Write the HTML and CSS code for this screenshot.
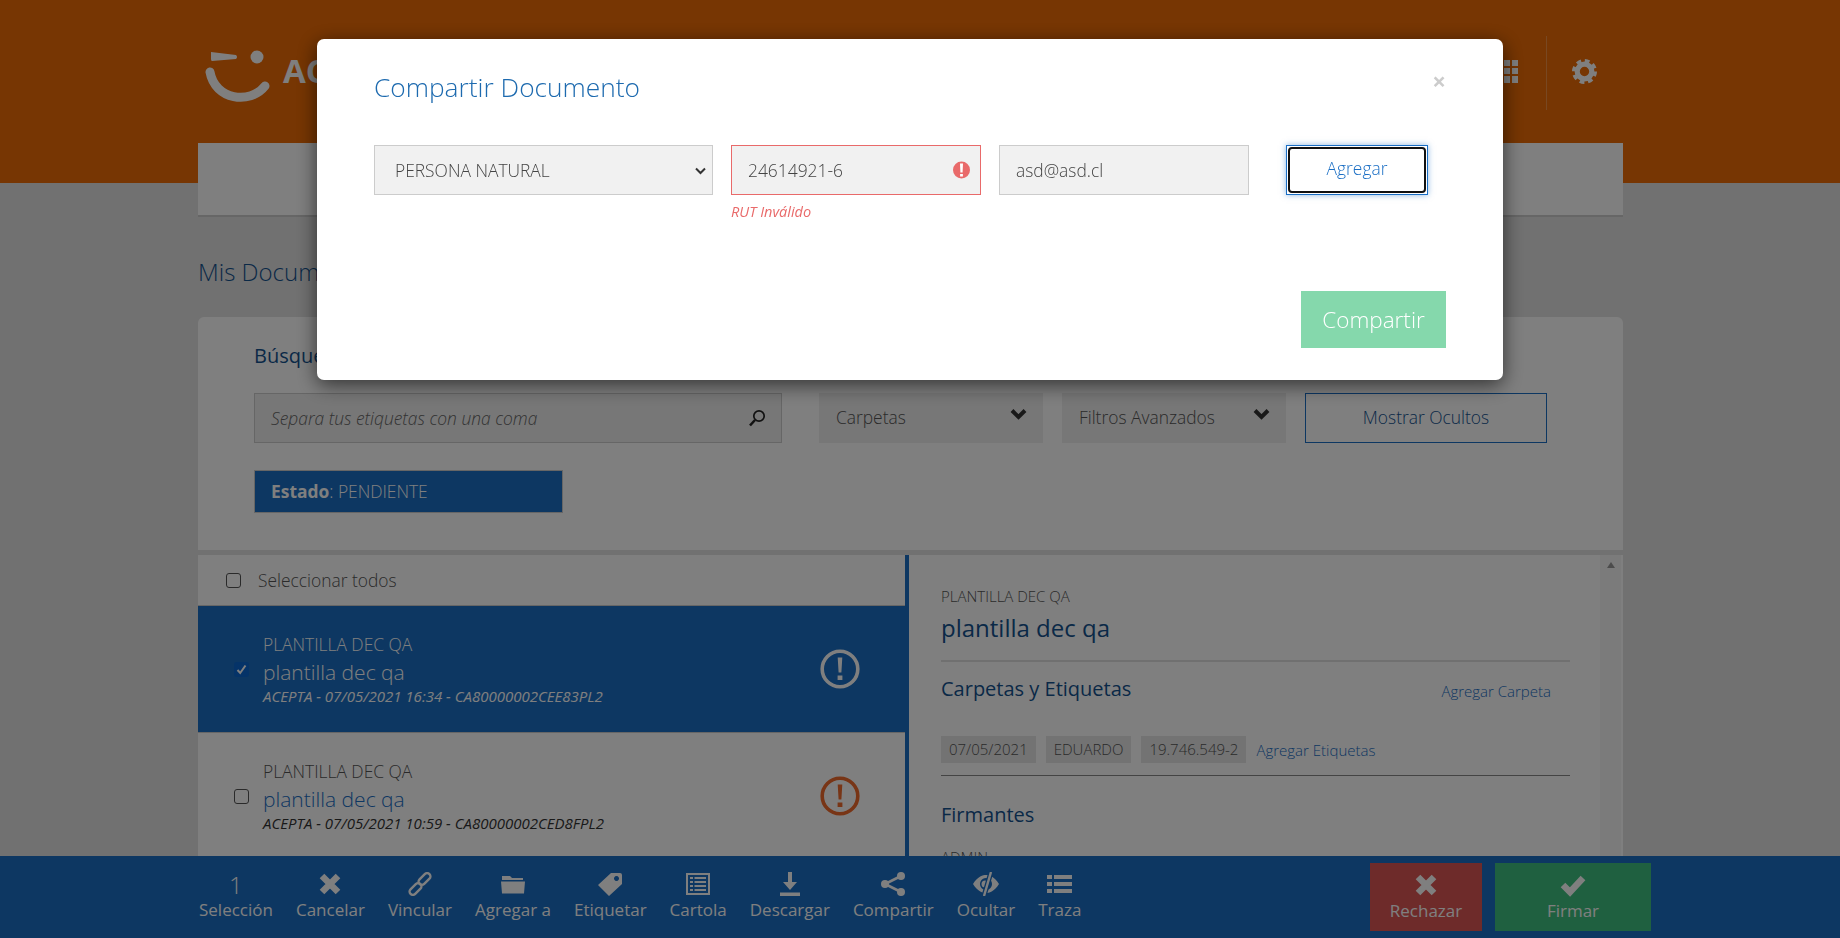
FILE: index.html
```html
<html>
  <head>
  <title>Mis Documentos</title>
<link rel="stylesheet" href="styles.css">
</head>
<body>
  <header class="top">
    <div class="top-inner">
      <div class="logo">
        <svg width="66" height="54" viewBox="0 0 66 54">
          <path d="M6 2 L31 5 Q33 7 31 9 L7 11 Q6 11 6 9 Z" fill="currentColor"/>
          <circle cx="52" cy="7" r="6.5" fill="currentColor"/>
          <path d="M5 22 C10 50 45 55 60 36" fill="none" stroke="currentColor" stroke-width="9" stroke-linecap="round"/>
        </svg>
        <span class="logo-text">ACEPTA</span>
      </div>
      <div class="top-tools">
        <svg class="grid-icon" width="22" height="23" viewBox="0 0 22 23">
          <path d="M0 0h6v6H0zM8 0h6v6H8zM16 0h6v6h-6zM0 8h6v6H0zM8 8h6v6H8zM16 8h6v6h-6zM0 16h6v7H0zM8 16h6v7H8zM16 16h6v7h-6z" fill="currentColor"/>
        </svg>
        <div class="top-sep"></div>
        <svg class="gear-icon" width="25" height="25" viewBox="0 0 24 24">
          <circle cx="12" cy="12" r="7" fill="none" stroke="currentColor" stroke-width="5"/>
          <circle cx="12" cy="12" r="10.4" fill="none" stroke="currentColor" stroke-width="3.2" stroke-dasharray="4.6 3.57"/>
        </svg>
      </div>
    </div>
  </header>

  <div class="wrap">
    <nav class="nav-panel"></nav>
    <h2 class="page-title">Mis Documentos</h2>

    <section class="search-panel">
      <h3 class="search-title">Búsqueda Avanzada</h3>
      <div class="search-row">
        <div class="search-box">
          <span class="placeholder">Separa tus etiquetas con una coma</span>
          <svg width="18" height="18" viewBox="0 0 18 18">
            <circle cx="11" cy="7" r="5.2" fill="none" stroke="currentColor" stroke-width="1.7"/>
            <path d="M7 11 L2 16.5" stroke="currentColor" stroke-width="2.6"/>
          </svg>
        </div>
        <div class="drop">
          <span>Carpetas</span>
          <svg class="chev" width="17" height="12" viewBox="0 0 17 12"><path d="M2 2.5 L8.5 9 L15 2.5" fill="none" stroke="currentColor" stroke-width="4"/></svg>
        </div>
        <div class="drop">
          <span>Filtros Avanzados</span>
          <svg class="chev" width="17" height="12" viewBox="0 0 17 12"><path d="M2 2.5 L8.5 9 L15 2.5" fill="none" stroke="currentColor" stroke-width="4"/></svg>
        </div>
        <div class="show-hidden">Mostrar Ocultos</div>
      </div>
      <div class="state-tag"><b>Estado</b>: PENDIENTE</div>
    </section>

    <section class="results">
      <div class="list">
        <div class="select-all"><span class="check"></span>Seleccionar todos</div>

        <div class="doc active">
          <span class="check on">
            <svg width="11" height="11" viewBox="0 0 11 11"><path d="M1.5 6 L4.2 9 L9.5 1.5" fill="none" stroke="#fff" stroke-width="2"/></svg>
          </span>
          <div class="doc-text">
            <div class="doc-type">PLANTILLA DEC QA</div>
            <div class="doc-name">plantilla dec qa</div>
            <div class="doc-meta">ACEPTA - 07/05/2021 16:34 - CA80000002CEE83PL2</div>
          </div>
          <svg class="warn" width="40" height="40" viewBox="0 0 40 40">
            <circle cx="20" cy="20" r="17.8" fill="none" stroke="currentColor" stroke-width="3.6"/>
            <path d="M17.7 8.5h4.6l-.9 15h-2.8z M17.6 26.5h4.8v4.6h-4.8z" fill="currentColor"/>
          </svg>
        </div>

        <div class="doc">
          <span class="check"></span>
          <div class="doc-text">
            <div class="doc-type">PLANTILLA DEC QA</div>
            <div class="doc-name">plantilla dec qa</div>
            <div class="doc-meta">ACEPTA - 07/05/2021 10:59 - CA80000002CED8FPL2</div>
          </div>
          <svg class="warn warn-red" width="40" height="40" viewBox="0 0 40 40">
            <circle cx="20" cy="20" r="17.8" fill="none" stroke="currentColor" stroke-width="3.6"/>
            <path d="M17.7 8.5h4.6l-.9 15h-2.8z M17.6 26.5h4.8v4.6h-4.8z" fill="currentColor"/>
          </svg>
        </div>
      </div>

      <div class="detail">
        <div class="detail-body">
          <div class="detail-type">PLANTILLA DEC QA</div>
          <div class="detail-name">plantilla dec qa</div>
          <div class="detail-head">
            <h4>Carpetas y Etiquetas</h4>
            <a class="link-small">Agregar Carpeta</a>
          </div>
          <div class="chips">
            <span class="chip">07/05/2021</span>
            <span class="chip">EDUARDO</span>
            <span class="chip">19.746.549-2</span>
            <a class="link-small">Agregar Etiquetas</a>
          </div>
          <h4 class="signers">Firmantes</h4>
          <div class="detail-type">ADMIN</div>
        </div>
        <div class="scroll-track"><span class="scroll-up"></span></div>
      </div>
    </section>
  </div>

  <footer class="bottom-bar">
    <div class="bar-item">
      <span class="bar-count">1</span>
      <span>Selección</span>
    </div>
    <div class="bar-item">
      <svg width="24" height="24" viewBox="0 0 24 24"><path d="M4 4 L20 20 M20 4 L4 20" stroke="currentColor" stroke-width="6.5"/></svg>
      <span>Cancelar</span>
    </div>
    <div class="bar-item">
      <svg width="24" height="24" viewBox="0 0 24 24" fill="none" stroke="currentColor" stroke-width="2.4">
        <rect x="13.2" y="0" width="6.6" height="14" rx="3.3" transform="rotate(45 16.5 7)"/>
        <rect x="4.2" y="10" width="6.6" height="14" rx="3.3" transform="rotate(45 7.5 17)"/>
      </svg>
      <span>Vincular</span>
    </div>
    <div class="bar-item">
      <svg width="24" height="24" viewBox="0 0 24 24"><path d="M1 4 h8 l2 2 h11 v2 H1z M0 9.5 h24 l-1 12 H1z" fill="currentColor"/></svg>
      <span>Agregar a</span>
    </div>
    <div class="bar-item">
      <svg width="24" height="24" viewBox="0 0 24 24"><path fill-rule="evenodd" d="M13 1 h9 a2 2 0 0 1 2 2 v9 L11 24 L0 13z M18.5 4 a2.5 2.5 0 1 0 .01 0z" fill="currentColor"/></svg>
      <span>Etiquetar</span>
    </div>
    <div class="bar-item">
      <svg width="24" height="24" viewBox="0 0 24 24"><path fill-rule="evenodd" d="M0 1h24v22H0z M2 3v18h20V3z M4 5h3v2H4z M8.5 5H20v2H8.5z M4 9h3v2H4z M8.5 9H20v2H8.5z M4 13h3v2H4z M8.5 13H20v2H8.5z M4 17h3v2H4z M8.5 17H20v2H8.5z" fill="currentColor"/></svg>
      <span>Cartola</span>
    </div>
    <div class="bar-item">
      <svg width="24" height="24" viewBox="0 0 24 24"><path d="M10 0h4v10h5l-7 8-7-8h5z M2 20.5h20v3.5H2z" fill="currentColor"/></svg>
      <span>Descargar</span>
    </div>
    <div class="bar-item">
      <svg width="24" height="24" viewBox="0 0 24 24">
        <path d="M20 4 L4 12 L20 20" fill="none" stroke="currentColor" stroke-width="2.6"/>
        <circle cx="20" cy="4" r="4" fill="currentColor"/><circle cx="4" cy="12" r="4" fill="currentColor"/><circle cx="20" cy="20" r="4" fill="currentColor"/>
      </svg>
      <span>Compartir</span>
    </div>
    <div class="bar-item">
      <svg width="26" height="24" viewBox="0 0 26 24">
        <path fill-rule="evenodd" d="M0 12 C5 4 10 3 13 3 C16 3 21 4 26 12 C21 20 16 21 13 21 C10 21 5 20 0 12z M13 6 a6 6 0 1 0 .01 0z" fill="currentColor"/>
        <circle cx="12" cy="12" r="3.5" fill="currentColor"/>
        <path d="M18 0 L11 24" stroke="#1a6ec4" stroke-width="5"/>
        <path d="M18 0 L11 24" stroke="currentColor" stroke-width="2.4"/>
      </svg>
      <span>Ocultar</span>
    </div>
    <div class="bar-item">
      <svg width="25" height="24" viewBox="0 0 25 24"><path d="M0 3h5v4H0z M7 3h18v4H7z M0 10h5v4H0z M7 10h18v4H7z M0 17h5v4H0z M7 17h18v4H7z" fill="currentColor"/></svg>
      <span>Traza</span>
    </div>
    <div class="bar-actions">
      <div class="bar-btn reject">
        <svg width="24" height="24" viewBox="0 0 24 24"><path d="M4 4 L20 20 M20 4 L4 20" stroke="currentColor" stroke-width="6.5"/></svg>
        <span>Rechazar</span>
      </div>
      <div class="bar-btn sign">
        <svg width="26" height="24" viewBox="0 0 26 24"><path d="M3 12 L10 19 L23 5" fill="none" stroke="currentColor" stroke-width="6.5"/></svg>
        <span>Firmar</span>
      </div>
    </div>
  </footer>

  <div class="backdrop">
    <div class="modal">
      <div class="modal-head">
        <h1>Compartir Documento</h1>
        <span class="close">×</span>
      </div>
      <form class="share-form">
        <div class="select-wrap">
          <select class="field field-type">
            <option>PERSONA NATURAL</option>
          </select>
          <svg class="select-arrow" width="11" height="8" viewBox="0 0 11 8"><path d="M1 1.5 L5.5 6 L10 1.5" fill="none" stroke="#333" stroke-width="2"/></svg>
        </div>
        <div class="field-wrap">
          <input class="field bad" type="text" value="24614921-6">
          <svg class="bad-icon" width="17" height="20" viewBox="0 0 17 20">
            <circle cx="8.5" cy="10" r="8.5" fill="#e96a6a"/>
            <path d="M7 3.5h3l-.4 9H7.4z M7.1 14h2.8v2.6H7.1z" fill="#fff"/>
          </svg>
          <div class="error">RUT Inválido</div>
        </div>
        <input class="field" type="text" value="asd@asd.cl">
        <button class="add-btn" type="button"><span>Agregar</span></button>
      </form>
      <div class="modal-foot">
        <button class="share-btn" type="button">Compartir</button>
      </div>
    </div>
  </div>
</body>
</html>
```

FILE: styles.css
```css
body {
  margin: 0;
  height: 938px;
  overflow: hidden;
  background-color: #e2e2e2;
  font-family: "Open Sans", Arial, sans-serif;
  font-weight: 300;
  color: #555;
}

h1, h2, h3, h4 {
  margin: 0;
  font-weight: 400;
}

/* header */
.top {
  height: 183px;
  background-color: #ee6c06;
  color: #fff;
}

.top-inner {
  display: flex;
  justify-content: space-between;
  width: 1425px;
  margin-left: 198px;
}

.logo {
  display: flex;
  align-items: center;
  gap: 12px;
  margin: 43px 0 0 7px;
}

.logo-text {
  font-size: 33px;
  font-weight: 700;
  margin-top: -12px;
  line-height: 40px;
}

.top-tools {
  display: flex;
  align-items: center;
  height: 74px;
  margin-top: 36px;
  padding-right: 26px;
}

.grid-icon, .gear-icon {
  margin-top: -4px;
}

.top-sep {
  width: 1px;
  height: 74px;
  margin: 0 25px 0 28px;
  background-color: rgba(255, 255, 255, 0.25);
}

/* page */
.wrap {
  width: 1425px;
  margin: -40px 0 0 198px;
}

.nav-panel {
  height: 72px;
  background-color: #fff;
  border-bottom: 2px solid #ccc;
}

.page-title {
  height: 100px;
  font-size: 24px;
  font-weight: 300;
  line-height: 110px;
  color: #14528f;
}

.search-panel {
  height: 233px;
  box-sizing: border-box;
  padding: 24px 0 0 56px;
  background-color: #fff;
  border-radius: 6px 6px 0 0;
}

.search-title {
  height: 52px;
  font-size: 20px;
  line-height: 30px;
  color: #14528f;
}

.search-row {
  display: flex;
  height: 50px;
}

.search-box {
  display: flex;
  align-items: center;
  justify-content: space-between;
  width: 528px;
  box-sizing: border-box;
  margin-right: 37px;
  padding: 0 15px 0 16px;
  background-color: #efefef;
  border: 1px solid #ccc;
  color: #222;
}

.placeholder {
  font-size: 17.4px;
  font-style: italic;
  color: #666;
}

.drop {
  display: flex;
  justify-content: space-between;
  width: 224px;
  box-sizing: border-box;
  margin-right: 19px;
  padding: 12px 16px 0 17px;
  background-color: #eee;
  font-size: 17.4px;
}

.chev {
  margin-top: 3px;
  color: #333;
}

.show-hidden {
  width: 242px;
  box-sizing: border-box;
  border: 1px solid #1a6ec4;
  font-size: 17.4px;
  line-height: 46px;
  text-align: center;
  color: #14528f;
}

.state-tag {
  width: 309px;
  height: 43px;
  box-sizing: border-box;
  margin-top: 27px;
  padding-left: 16px;
  background-color: #1a6ec4;
  border: 1px solid #ccc;
  font-size: 17.4px;
  line-height: 40px;
  color: #fff;
}

.state-tag b {
  font-weight: 700;
}

.results {
  display: flex;
  margin-top: 5px;
}

.list {
  width: 707px;
  background-color: #fff;
}

.select-all {
  display: flex;
  align-items: center;
  height: 51px;
  box-sizing: border-box;
  padding-left: 28px;
  border-bottom: 1px solid #ccc;
  font-size: 17.4px;
}

.select-all .check {
  margin-right: 17px;
}

.check {
  display: flex;
  align-items: center;
  justify-content: center;
  width: 15px;
  height: 15px;
  box-sizing: border-box;
  flex-shrink: 0;
  background-color: #fff;
  border: 1.5px solid #555;
  border-radius: 3px;
}

.check.on {
  background-color: #0a66d0;
  border: none;
}

.doc {
  display: flex;
  align-items: center;
  height: 127px;
  box-sizing: border-box;
  padding: 0 45px 0 36px;
  border-bottom: 1px solid #ccc;
}

.doc.active {
  background-color: #1a6ec4;
  color: #fff;
}

.doc-text {
  flex: 1;
  margin: -3px 0 0 14px;
}

.doc-type {
  font-size: 17.4px;
  line-height: 28px;
}

.doc-name {
  font-size: 21px;
  line-height: 28px;
  color: #1a6ec4;
}

.doc.active .doc-name {
  color: #fff;
}

.doc-meta {
  font-size: 15px;
  font-style: italic;
  font-weight: 400;
  line-height: 20px;
  color: #333;
}

.doc.active .doc-meta {
  color: #fff;
}

.warn {
  color: #fff;
}

.warn-red {
  color: #f06a2c;
}

.detail {
  display: flex;
  width: 718px;
  height: 400px;
  box-sizing: border-box;
  background-color: #fff;
  border-left: 4px solid #1a6ec4;
}

.detail-body {
  width: 629px;
  margin-left: 32px;
  padding-top: 29px;
}

.detail-type {
  font-size: 15px;
  line-height: 24px;
}

.detail-name {
  height: 54px;
  box-sizing: border-box;
  padding-top: 4px;
  border-bottom: 2px solid #e0e0e0;
  font-size: 24px;
  font-weight: 400;
  line-height: 32px;
  color: #14528f;
}

.detail-head {
  display: flex;
  justify-content: space-between;
  height: 74px;
  padding: 12px 19px 0 0;
  box-sizing: border-box;
}

.detail-head h4, .signers {
  font-size: 20px;
  line-height: 30px;
  color: #14528f;
}

.link-small {
  font-size: 15px;
  line-height: 34px;
  color: #1a6ec4;
}

.chips {
  display: flex;
  align-items: center;
  gap: 10px;
  height: 27px;
  padding-bottom: 12px;
  border-bottom: 1px solid #888;
}

.chip {
  height: 27px;
  padding: 0 8px;
  background-color: #e6e6e6;
  font-size: 15px;
  line-height: 27px;
}

.signers {
  margin-top: 24px;
  height: 45px;
}

.scroll-track {
  width: 21px;
  margin-left: 30px;
  background-color: #f6f6f6;
}

.scroll-up {
  display: block;
  width: 0;
  margin: 7px auto 0;
  border: 4.5px solid transparent;
  border-top: 0;
  border-bottom: 6px solid #999;
}

/* bottom bar */
.bottom-bar {
  position: fixed;
  left: 0;
  right: 0;
  bottom: 0;
  display: flex;
  gap: 23px;
  height: 82px;
  box-sizing: border-box;
  padding: 16px 0 0 199px;
  background-color: #1a6ec4;
  color: #fff;
  font-size: 17px;
  font-weight: 400;
}

.bar-item {
  display: flex;
  flex-direction: column;
  align-items: center;
  gap: 3px;
  line-height: 22px;
}

.bar-count {
  height: 24px;
  font-size: 24px;
  font-weight: 300;
  line-height: 26px;
}

.bar-actions {
  display: flex;
  gap: 13px;
  margin: -9px 0 0 auto;
  padding-right: 189px;
}

.bar-btn {
  display: flex;
  flex-direction: column;
  align-items: center;
  gap: 3px;
  height: 68px;
  box-sizing: border-box;
  padding-top: 10px;
  line-height: 22px;
}

.reject {
  width: 112px;
  background-color: #dc5654;
}

.sign {
  width: 156px;
  background-color: #3fc180;
}

/* share modal */
.backdrop {
  position: fixed;
  top: 0;
  left: 0;
  right: 0;
  bottom: 0;
  padding-top: 39px;
  background-color: rgba(0, 0, 0, 0.5);
}

.modal {
  width: 1186px;
  height: 341px;
  box-sizing: border-box;
  margin-left: 317px;
  padding: 0 57px;
  background-color: #fff;
  border-radius: 7px;
  box-shadow: 0 5px 20px rgba(0, 0, 0, 0.6);
}

.modal-head {
  display: flex;
  justify-content: space-between;
  height: 106px;
}

.modal-head h1 {
  padding-top: 29px;
  font-size: 26.3px;
  font-weight: 300;
  line-height: 38px;
  color: #1d6aaf;
}

.close {
  padding-top: 22px;
  font-size: 24px;
  font-weight: 700;
  line-height: 40px;
  color: #ccc;
}

.share-form {
  display: flex;
  gap: 18px;
  height: 130px;
}

.field {
  width: 250px;
  height: 50px;
  box-sizing: border-box;
  padding: 0 16px;
  background-color: #f1f1f1;
  border: 1px solid #ccc;
  border-radius: 0;
  outline: none;
  font-family: "Open Sans", Arial, sans-serif;
  font-size: 17.4px;
  font-weight: 300;
  color: #444;
}

.select-wrap {
  position: relative;
  width: 339px;
}

.field-type {
  width: 339px;
  padding-left: 20px;
  appearance: none;
}

.select-arrow {
  position: absolute;
  top: 22px;
  right: 7px;
}

.field-wrap {
  position: relative;
  width: 250px;
}

.bad {
  border-color: #e96a6a;
}

.bad-icon {
  position: absolute;
  top: 15px;
  right: 11px;
}

.error {
  margin-top: 7px;
  font-size: 14.5px;
  font-style: italic;
  font-weight: 400;
  line-height: 20px;
  color: #e96a6a;
}

.add-btn {
  width: 142px;
  height: 50px;
  box-sizing: border-box;
  margin-left: 19px;
  padding: 1px;
  background-color: #fff;
  border: 1px solid #1a6ec4;
  box-shadow: 0 0 6px rgba(26, 110, 196, 0.5);
  font-family: "Open Sans", Arial, sans-serif;
  font-size: 17.4px;
  font-weight: 300;
  color: #1a6ec4;
}

.add-btn span {
  display: block;
  height: 100%;
  box-sizing: border-box;
  border: 2.5px solid #111;
  border-radius: 4px;
  line-height: 38px;
}

.modal-foot {
  display: flex;
  justify-content: flex-end;
}

.share-btn {
  width: 145px;
  height: 57px;
  background-color: #85d8ac;
  border: none;
  font-family: "Open Sans", Arial, sans-serif;
  font-size: 22.5px;
  font-weight: 300;
  color: #fff;
}
```
